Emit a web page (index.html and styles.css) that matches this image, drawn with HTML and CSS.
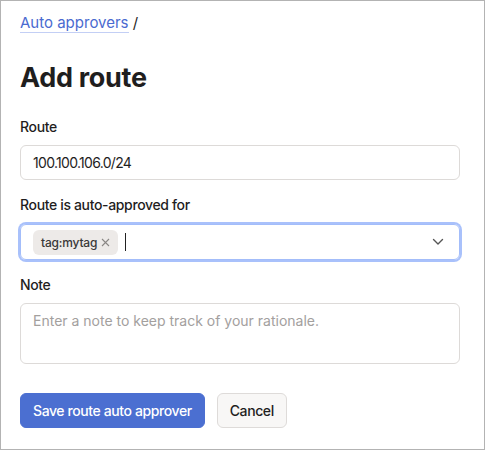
FILE: index.html
```html
<!DOCTYPE html>
<html>
<head>
<meta charset="utf-8">
<link rel="stylesheet" href="styles.css">
</head>
<body>
<div class="page">
  <nav class="crumbs"><a class="crumb-link">Auto approvers</a> <span class="sep">/</span></nav>
  <h1 class="title">Add route</h1>
  <div class="field first">
    <label class="label">Route</label>
    <div class="input">100.100.106.0/24</div>
  </div>
  <div class="field">
    <label class="label label-tight">Route is auto-approved for</label>
    <div class="select">
      <span class="chip">tag:mytag <svg class="chip-x" width="9" height="9" viewBox="0 0 9 9"><path d="M1 1L8 8M8 1L1 8" stroke="#8a8785" stroke-width="1.1" fill="none"/></svg></span>
      <span class="caret"></span>
      <svg class="chevron" width="12" height="8" viewBox="0 0 12 8"><path d="M1.5 1.5L6 6L10.5 1.5" stroke="#555" stroke-width="1.4" fill="none" stroke-linecap="round" stroke-linejoin="round"/></svg>
    </div>
  </div>
  <div class="field">
    <label class="label">Note</label>
    <div class="textarea">Enter a note to keep track of your rationale.</div>
  </div>
  <div class="actions">
    <button class="btn btn-primary">Save route auto approver</button>
    <button class="btn btn-secondary">Cancel</button>
  </div>
</div>
</body>
</html>
```
FILE: styles.css
```css
* { box-sizing: border-box; }
html, body { margin: 0; padding: 0; }
body {
  font-family: Inter, "Noto Sans", sans-serif;
  color: #1f1e1e;
  background: #fff;
}
.page {
  width: 485px;
  height: 450px;
  border: 1px solid #b3b3b3;
  padding: 11px 24px 0 19px;
}
.crumbs {
  font-size: 15px;
  line-height: 22px;
  height: 22px;
}
.crumb-link {
  color: #4a6ad0;
  border-bottom: 1px solid #c3cff5;
}
.sep { color: #1f1e1e; }
.title {
  margin: 27px 0 0 0;
  font-size: 27px;
  line-height: 34px;
  font-weight: 700;
  letter-spacing: -0.3px;
}
.field.first { margin-top: 22px; }
.label {
  display: block;
  font-size: 14px;
  line-height: 20px;
  font-weight: 500;
  letter-spacing: -0.35px;
  margin-bottom: 8px;
}
.label-tight { margin-bottom: 9px; }
.input {
  height: 35px;
  border: 1px solid #dddad8;
  border-radius: 6px;
  padding: 0 12px;
  font-size: 14px;
  line-height: 33px;
  letter-spacing: -0.7px;
  margin-bottom: 15px;
}
.select {
  height: 36px;
  border: 1px solid #a3bdfa;
  box-shadow: 0 0 0 2px #a9c1fb;
  border-radius: 6px;
  padding: 0 12px;
  display: flex;
  align-items: center;
  margin-bottom: 15px;
}
.chip {
  background: #edeae8;
  border-radius: 6px;
  height: 25px;
  padding: 0 8px 0 8px;
  font-size: 12px;
  font-weight: 500;
  letter-spacing: -0.2px;
  color: #3a3838;
  display: inline-flex;
  align-items: center;
  gap: 4px;
}
.chip-x { display: block; }
.caret {
  width: 1px;
  height: 18px;
  background: #222;
  margin-left: 7px;
}
.chevron { margin-left: auto; margin-right: 3px; }
.textarea {
  height: 61px;
  border: 1px solid #dddad8;
  border-radius: 6px;
  padding: 7px 12px;
  font-size: 14px;
  line-height: 20px;
  color: #a3a09e;
}
.actions {
  display: flex;
  gap: 12px;
  margin-top: 29px;
}
.btn {
  font-family: inherit;
  font-size: 14px;
  font-weight: 500;
  letter-spacing: -0.4px;
  height: 35px;
  border-radius: 6px;
  padding: 0 12px;
}
.btn-primary {
  background: #4b6fd1;
  color: #fff;
  border: 1px solid #4b6fd1;
}
.btn-secondary {
  background: #f8f7f6;
  color: #1f1e1e;
  border: 1px solid #dedbd9;
}
```
